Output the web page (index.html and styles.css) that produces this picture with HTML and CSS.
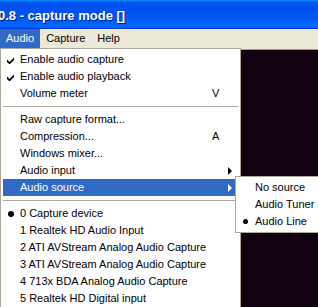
FILE: index.html
```html
<!DOCTYPE html>
<html lang="en">

<head>
    <meta charset="UTF-8" />
    <title>capture mode</title>
    <link rel="stylesheet" href="styles.css">
</head>

<body>
    <div class="window">
        <div class="title-bar">
            <span class="title-text">0.8 - capture mode []</span>
        </div>
        <div class="menu-bar">
            <span class="menu-top active">Audio</span>
            <span class="menu-top">Capture</span>
            <span class="menu-top">Help</span>
        </div>
        <div class="client">
            <div class="video"></div>
        </div>

        <div class="dropdown">
            <div class="item">
                <span class="mark"><svg class="check" width="7" height="7" viewBox="0 0 7 7"><polygon points="0,2.5 2.5,5 7,0.5 7,3 2.5,7.5 0,5" /></svg></span>
                <span>Enable audio capture</span><span></span>
            </div>
            <div class="item">
                <span class="mark"><svg class="check" width="7" height="7" viewBox="0 0 7 7"><polygon points="0,2.5 2.5,5 7,0.5 7,3 2.5,7.5 0,5" /></svg></span>
                <span>Enable audio playback</span><span></span>
            </div>
            <div class="item">
                <span class="mark"></span>
                <span>Volume meter</span><span class="key">V</span>
            </div>
            <div class="sep"></div>
            <div class="item">
                <span class="mark"></span>
                <span>Raw capture format...</span><span></span>
            </div>
            <div class="item">
                <span class="mark"></span>
                <span>Compression...</span><span class="key">A</span>
            </div>
            <div class="item">
                <span class="mark"></span>
                <span>Windows mixer...</span><span></span>
            </div>
            <div class="item">
                <span class="mark"></span>
                <span>Audio input</span><span class="key"><i class="arrow"></i></span>
            </div>
            <div class="item selected">
                <span class="mark"></span>
                <span>Audio source</span><span class="key"><i class="arrow"></i></span>
            </div>
            <div class="sep"></div>
            <div class="item">
                <span class="mark"><i class="dot"></i></span>
                <span>0 Capture device</span><span></span>
            </div>
            <div class="item">
                <span class="mark"></span>
                <span>1 Realtek HD Audio Input</span><span></span>
            </div>
            <div class="item">
                <span class="mark"></span>
                <span>2 ATI AVStream Analog Audio Capture</span><span></span>
            </div>
            <div class="item">
                <span class="mark"></span>
                <span>3 ATI AVStream Analog Audio Capture</span><span></span>
            </div>
            <div class="item">
                <span class="mark"></span>
                <span>4 713x BDA Analog Audio Capture</span><span></span>
            </div>
            <div class="item">
                <span class="mark"></span>
                <span>5 Realtek HD Digital input</span><span></span>
            </div>
        </div>

        <div class="submenu">
            <div class="item">
                <span class="mark"></span>
                <span>No source</span><span></span>
            </div>
            <div class="item">
                <span class="mark"></span>
                <span>Audio Tuner</span><span></span>
            </div>
            <div class="item">
                <span class="mark"><i class="dot small"></i></span>
                <span>Audio Line</span><span></span>
            </div>
        </div>
    </div>
</body>

</html>
```

FILE: styles.css
```css
*,
::after,
::before {
    box-sizing: border-box;
    padding: 0;
    margin: 0;
}

body {
    width: 318px;
    height: 307px;
    overflow: hidden;
    background-color: #ece9d8;
    font-family: "Liberation Sans", Arial, sans-serif;
    font-size: 11px;
}

.window {
    position: relative;
    width: 318px;
    height: 307px;
    display: flex;
    flex-direction: column;
}

.title-bar {
    height: 29px;
    padding-top: 8px;
    background: linear-gradient(180deg, #0997ff, #0053ee 8%, #0050ee 40%, #06f 88%, #06f 93%, #005bff 95%, #003dd7 96%, #003dd7);
    white-space: nowrap;
    overflow: hidden;
}

.title-text {
    display: block;
    margin-left: -2px;
    color: white;
    font-weight: bold;
    font-size: 13px;
    line-height: 15px;
    text-shadow: 1px 1px #0a1883;
}

.menu-bar {
    height: 19px;
    display: flex;
    background-color: #ece9d8;
}

.menu-top {
    padding: 0 6px;
    line-height: 19px;
    color: black;

    &.active {
        background-color: #316ac5;
        color: white;
    }
}

.client {
    flex: 1;
    padding-top: 1px;
    padding-left: 240px;
}

.video {
    height: 100%;
    border-top: 1px solid #a09d92;
    border-left: 1px solid #a09d92;
    background-color: #130010;
}

.dropdown,
.submenu {
    position: absolute;
    background-color: white;
    border: 1px solid #aca899;
    padding: 2px;
}

.dropdown {
    left: 0;
    top: 48px;
    width: 241px;
    height: 270px;
}

.submenu {
    left: 235px;
    top: 176px;
    width: 100px;
}

.item {
    display: grid;
    grid-template-columns: 17px 1fr 26px;
    align-items: center;
    height: 17px;
    line-height: 17px;
    color: black;
    white-space: nowrap;

    &.selected {
        background-color: #316ac5;
        color: white;

        .arrow {
            border-left-color: white;
        }
    }
}

.mark {
    display: flex;
    align-items: center;
    height: 17px;
}

.check {
    margin-left: 4px;
    margin-top: 1px;
    fill: black;
}

.dot {
    display: block;
    width: 6px;
    height: 6px;
    margin-left: 5px;
    border-radius: 50%;
    background-color: black;

    &.small {
        width: 5px;
        height: 5px;
        margin-left: 5px;
    }
}

.key {
    display: flex;
    align-items: center;
}

.arrow {
    display: block;
    margin-left: 16px;
    width: 0;
    height: 0;
    border-top: 4px solid transparent;
    border-bottom: 4px solid transparent;
    border-left: 4px solid black;
}

.sep {
    margin: 4px 0;
    height: 1px;
    background-color: #aca899;
}
```
